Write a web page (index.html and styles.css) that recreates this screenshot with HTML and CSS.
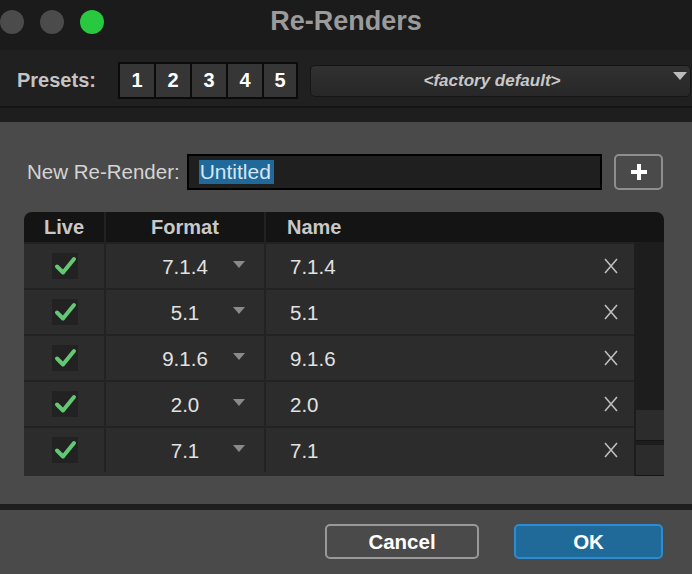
FILE: index.html
```html
<!DOCTYPE html>
<html lang="en">
<head>
    <meta charset="UTF-8">
    <meta name="viewport" content="width=device-width, initial-scale=1.0">
    <title>Re-Renders</title>
    <link rel="stylesheet" href="styles.css">
</head>
<body>
    <!-- title bar -->
    <div class="titlebar">
        <div class="lights">
            <span class="light"></span>
            <span class="light"></span>
            <span class="light green"></span>
        </div>
        <div class="title">Re-Renders</div>
        <div></div>
    </div>

    <!-- presets -->
    <div class="presets">
        <div class="presets-label">Presets:</div>
        <div class="preset-group">
            <button class="preset">1</button>
            <button class="preset">2</button>
            <button class="preset">3</button>
            <button class="preset">4</button>
            <button class="preset">5</button>
        </div>
        <div class="preset-select">
            <span class="preset-name">&lt;factory default&gt;</span>
            <span class="select-arrow"></span>
        </div>
    </div>
    <div class="presets-gap"></div>

    <div class="panel">
        <div class="new-row">
            <label class="new-label">New Re-Render:</label>
            <div class="name-field"><span class="selected">Untitled</span></div>
            <button class="add-btn">
                <svg width="16" height="16" viewBox="0 0 16 16">
                    <rect x="6" y="0" width="4" height="16" fill="#fff"/>
                    <rect x="0" y="6" width="16" height="4" fill="#fff"/>
                </svg>
            </button>
        </div>

        <div class="table">
            <div class="thead">
                <div class="th live">Live</div>
                <div class="th format">Format</div>
                <div class="th name">Name</div>
            </div>
            <div class="tbody-wrap">
                <div class="rows" id="rows"></div>
                <div class="scroll">
                    <div class="scroll-btn"></div>
                    <div class="scroll-btn"></div>
                </div>
            </div>
        </div>
    </div>

    <div class="divider"></div>

    <div class="footer">
        <button class="btn cancel">Cancel</button>
        <button class="btn ok">OK</button>
    </div>

    <script>
    // rows of the re-render list
    const renders = ['7.1.4', '5.1', '9.1.6', '2.0', '7.1'];
    const rows = document.getElementById('rows');

    renders.forEach(format => {
        const row = document.createElement('div');
        row.className = 'row';
        row.innerHTML = `
            <div class="td live">
                <span class="check">
                    <svg width="26" height="26" viewBox="0 0 26 26">
                        <polyline points="5,13.5 11,19.5 22,6" fill="none" stroke="#63c873" stroke-width="4" stroke-linecap="round" stroke-linejoin="round"/>
                    </svg>
                </span>
            </div>
            <div class="td format">
                <span class="format-value">${format}</span>
                <span class="format-arrow"></span>
            </div>
            <div class="td name">
                <span class="name-value">${format}</span>
                <svg class="remove" width="14" height="16" viewBox="0 0 14 16">
                    <path d="M1 1 L13 15 M13 1 L1 15" stroke="#bdbdbd" stroke-width="1.6" fill="none"/>
                </svg>
            </div>
        `;
        rows.appendChild(row);
    });
    </script>
</body>
</html>
```

FILE: styles.css
```css
html, body {
    margin: 0;
    padding: 0;
    font-family: "Liberation Sans", Arial, sans-serif;
    background-color: #4a4a4a;
    width: 692px;
    height: 574px;
    overflow: hidden;
}

button {
    font-family: inherit;
    cursor: pointer;
}

/* title bar */
.titlebar {
    display: grid;
    grid-template-columns: 1fr auto 1fr;
    align-items: start;
    height: 50px;
    background-color: #1b1b1b;
}

.lights {
    display: flex;
    gap: 16px;
    padding-top: 10px;
}

.light {
    width: 24px;
    height: 24px;
    border-radius: 50%;
    background-color: #4b4b4b;
}

.light.green {
    background-color: #28c840;
}

.title {
    line-height: 42px;
    font-size: 27px;
    font-weight: bold;
    color: #9b9b9b;
}

/* presets */
.presets {
    display: flex;
    align-items: center;
    height: 51px;
    padding-top: 5px;
    background-color: #202020;
    border-bottom: 2px solid #141414;
}

.presets-label {
    box-sizing: border-box;
    width: 118px;
    padding-left: 17px;
    font-size: 20px;
    font-weight: bold;
    color: #c4c4c4;
}

.preset-group {
    display: flex;
    gap: 2px;
    padding: 2px;
    background-color: #0b0b0b;
}

.preset {
    width: 34px;
    height: 33px;
    padding: 0;
    border: none;
    background-color: #363636;
    color: #fff;
    font-size: 20px;
    font-weight: bold;
}

.preset:last-child {
    width: 32px;
}

.preset-select {
    flex: 1;
    display: flex;
    align-items: center;
    height: 30px;
    margin-left: 12px;
    margin-right: 1px;
    border: 1px solid #151515;
    border-radius: 5px;
    background: linear-gradient(#313131, #272727);
}

.preset-name {
    flex: 1;
    text-align: center;
    font-size: 17px;
    font-weight: bold;
    font-style: italic;
    color: #c8c8c8;
}

.select-arrow {
    width: 0;
    height: 0;
    margin-right: 3px;
    margin-top: -10px;
    border-left: 7px solid transparent;
    border-right: 7px solid transparent;
    border-top: 8px solid #bdbdbd;
}

.presets-gap {
    height: 14px;
    background-color: #1e1e1e;
}

/* main panel */
.panel {
    padding: 32px 28px 28px 24px;
}

.new-row {
    display: flex;
    align-items: center;
    height: 36px;
}

.new-label {
    margin-left: 3px;
    margin-right: 7px;
    font-size: 20.5px;
    color: #d4d4d4;
}

.name-field {
    flex: 1;
    display: flex;
    align-items: center;
    height: 32px;
    padding-left: 10px;
    border: 2px solid #000;
    background-color: #1f1f1f;
}

.selected {
    padding: 0 3px 0 1px;
    line-height: 24px;
    font-size: 21px;
    color: #d6e6f3;
    background-color: #1f6a9a;
}

.add-btn {
    display: flex;
    align-items: center;
    justify-content: center;
    width: 49px;
    height: 36px;
    margin-left: 12px;
    margin-right: 1px;
    padding: 0;
    border: 2px solid #8e8e8e;
    border-radius: 5px;
    background-color: transparent;
}

/* table */
.table {
    margin-top: 22px;
}

.thead {
    display: grid;
    grid-template-columns: 82px 160px 1fr;
    height: 30px;
    background-color: #141414;
    border-radius: 8px 8px 0 0;
}

.th {
    line-height: 30px;
    font-size: 20px;
    font-weight: bold;
    color: #c8c8c8;
}

.th.live, .th.format {
    text-align: center;
    border-right: 2px solid #222;
}

.th.name {
    padding-left: 21px;
}

.tbody-wrap {
    display: flex;
    height: 234px;
}

.rows {
    flex: 1;
    background-color: #2c2c2c;
}

.row {
    display: grid;
    grid-template-columns: 82px 160px 1fr;
    height: 44px;
    border-top: 2px solid #222;
}

.td {
    display: flex;
    align-items: center;
    padding-top: 2px;
    font-size: 20.5px;
    color: #e2e2e2;
}

.td.live, .td.format {
    border-right: 2px solid #222;
}

.td.live {
    justify-content: center;
    padding-left: 1px;
    padding-top: 0;
}

.check {
    display: block;
    width: 26px;
    height: 26px;
    background-color: #222;
}

.check svg {
    display: block;
}

.td.format {
    padding-left: 31px;
}

.format-value {
    flex: 1;
    text-align: center;
}

.format-arrow {
    width: 0;
    height: 0;
    margin-right: 19px;
    margin-top: -6px;
    border-left: 6px solid transparent;
    border-right: 6px solid transparent;
    border-top: 7px solid #8a8a8a;
}

.td.name {
    padding-left: 24px;
    padding-right: 16px;
}

.name-value {
    flex: 1;
}

.remove {
    margin-top: -2px;
}

.scroll {
    display: flex;
    flex-direction: column;
    justify-content: flex-end;
    gap: 4px;
    width: 30px;
    padding-left: 2px;
    box-sizing: border-box;
    background-color: #1d1d1d;
}

.scroll-btn {
    height: 30px;
    background-color: #2c2c2c;
    border-bottom: 1px solid #151515;
}

/* footer */
.divider {
    height: 6px;
    background-color: #1e1e1e;
}

.footer {
    display: flex;
    justify-content: flex-end;
    gap: 35px;
    padding: 14px 29px 0 0;
}

.btn {
    height: 35px;
    border-radius: 5px;
    font-size: 20.5px;
    font-weight: bold;
    color: #fff;
}

.cancel {
    width: 154px;
    border: 2px solid #999;
    background-color: transparent;
}

.ok {
    width: 149px;
    border: 2px solid #2b8bd3;
    background-color: #1f6a99;
}
```
